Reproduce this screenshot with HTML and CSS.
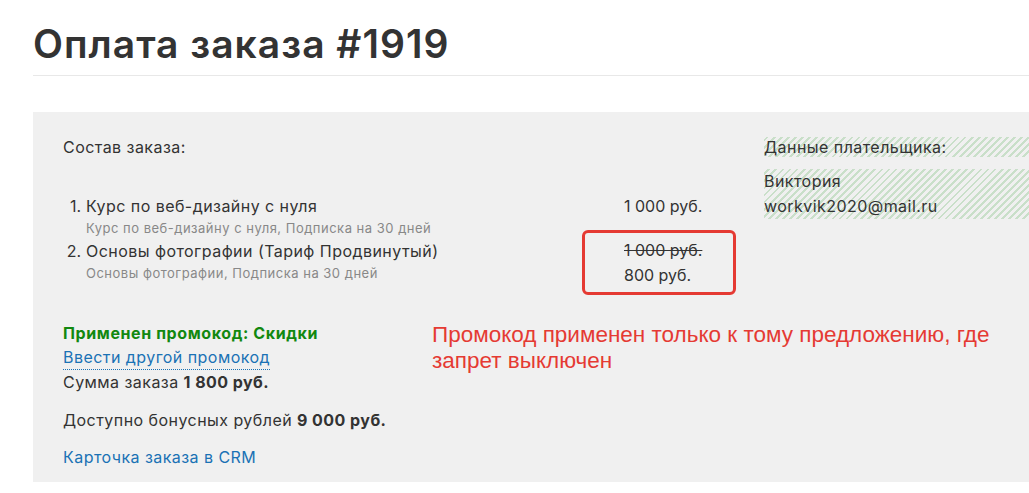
FILE: index.html
```html
<!DOCTYPE html>
<html>
<head>
  <meta charset="utf-8">
  <title>Оплата заказа</title>
  <link rel="stylesheet" href="styles.css">
</head>
<body>
<div class="page">
  <h1 class="title">Оплата заказа #1919</h1>

  <div class="order-box">
    <div class="order-top">
      <!-- состав заказа -->
      <div class="order-items">
        <p class="caption">Состав заказа:</p>
        <ol class="items">
          <li class="item">
            <div class="item-info">
              <div class="item-name">Курс по веб-дизайну с нуля</div>
              <div class="item-sub">Курс по веб-дизайну с нуля, Подписка на 30 дней</div>
            </div>
            <div class="item-price">1 000 руб.</div>
          </li>
          <li class="item">
            <div class="item-info">
              <div class="item-name">Основы фотографии (Тариф Продвинутый)</div>
              <div class="item-sub">Основы фотографии, Подписка на 30 дней</div>
            </div>
            <div class="item-price marked">
              <s>1 000 руб.</s>
              <div>800 руб.</div>
            </div>
          </li>
        </ol>
      </div>

      <!-- плательщик -->
      <div class="payer">
        <div class="payer-title hatch">Данные плательщика:</div>
        <div class="payer-data hatch">
          <div>Виктория</div>
          <div>workvik2020@mail.ru</div>
        </div>
      </div>
    </div>

    <div class="order-bottom">
      <div class="summary">
        <div class="promo-ok">Применен промокод: Скидки</div>
        <a href="#" class="promo-link">Ввести другой промокод</a>
        <div>Сумма заказа <b>1 800 руб.</b></div>
        <div class="bonus">Доступно бонусных рублей <b>9 000 руб.</b></div>
        <a href="#" class="crm-link">Карточка заказа в CRM</a>
      </div>
      <div class="note">Промокод применен только к тому предложению, где запрет выключен</div>
    </div>
  </div>
</div>
</body>
</html>
```

FILE: styles.css
```css
/* общие */
body { margin: 0; padding: 0; background: #fff; font-family: Inter, "Noto Sans", sans-serif; color: #333; overflow: hidden; }
.page { padding-left: 33px; }
.title { margin: 0; padding-top: 22px; height: 53px; font-size: 39px; font-weight: 600; line-height: 44px; color: #333; border-bottom: 1px solid #e8e8e8; letter-spacing: 1px; }

/* блок заказа */
.order-box { margin-top: 36px; background: #f0f0f0; padding: 25px 0 12px 30px; font-size: 16px; line-height: 25px; letter-spacing: 0.45px; }
.order-top { display: flex; }
.order-items { width: 641px; flex-shrink: 0; }
.caption { margin: 0; line-height: 20px; }
.items { margin: 38px 0 0 0; padding: 0; list-style: none; counter-reset: item; }
.item { display: flex; counter-increment: item; }
.item::before { content: counter(item) "."; width: 18px; padding-right: 5px; text-align: right; line-height: 22px; letter-spacing: 0; }
.item-info { flex: 1; }
.item-name { line-height: 22px; }
.item-sub { font-size: 13px; line-height: 23px; color: #888; letter-spacing: 0.5px; }
.item-price { line-height: 22px; width: 80px; letter-spacing: 0; }
.item-price.marked { position: relative; line-height: 25px; margin-top: -2px; }
.item-price.marked::after { content: ""; position: absolute; left: -42px; top: -8px; width: 148px; height: 59px; border: 3px solid #e53a33; border-radius: 6px; }

/* плательщик */
.payer { margin-left: 60px; flex: 1; }
.hatch { background: repeating-linear-gradient(-45deg, #f0f0f0 0, #f0f0f0 3px, #c9dfc9 3px, #c9dfc9 5px); }
.payer-title { line-height: 20px; }
.payer-data { margin-top: 12px; line-height: 25px; }

/* итог */
.order-bottom { display: flex; margin-top: 33px; }
.summary { width: 369px; flex-shrink: 0; }
.summary a { display: block; width: fit-content; color: #1a72b5; text-decoration: none; }
.promo-ok { color: #12880f; font-weight: 700; letter-spacing: 0.6px; }
.promo-link { border-bottom: 1px dotted #1a72b5; line-height: 23px; }
.summary b { font-weight: 700; }
.bonus { margin-top: 13px; }
.crm-link { margin-top: 12px; }
.note { font-family: "Liberation Sans", Arial, sans-serif; font-size: 22.5px; line-height: 26px; color: #e53a33; letter-spacing: 0; margin-top: 1px; }
```
